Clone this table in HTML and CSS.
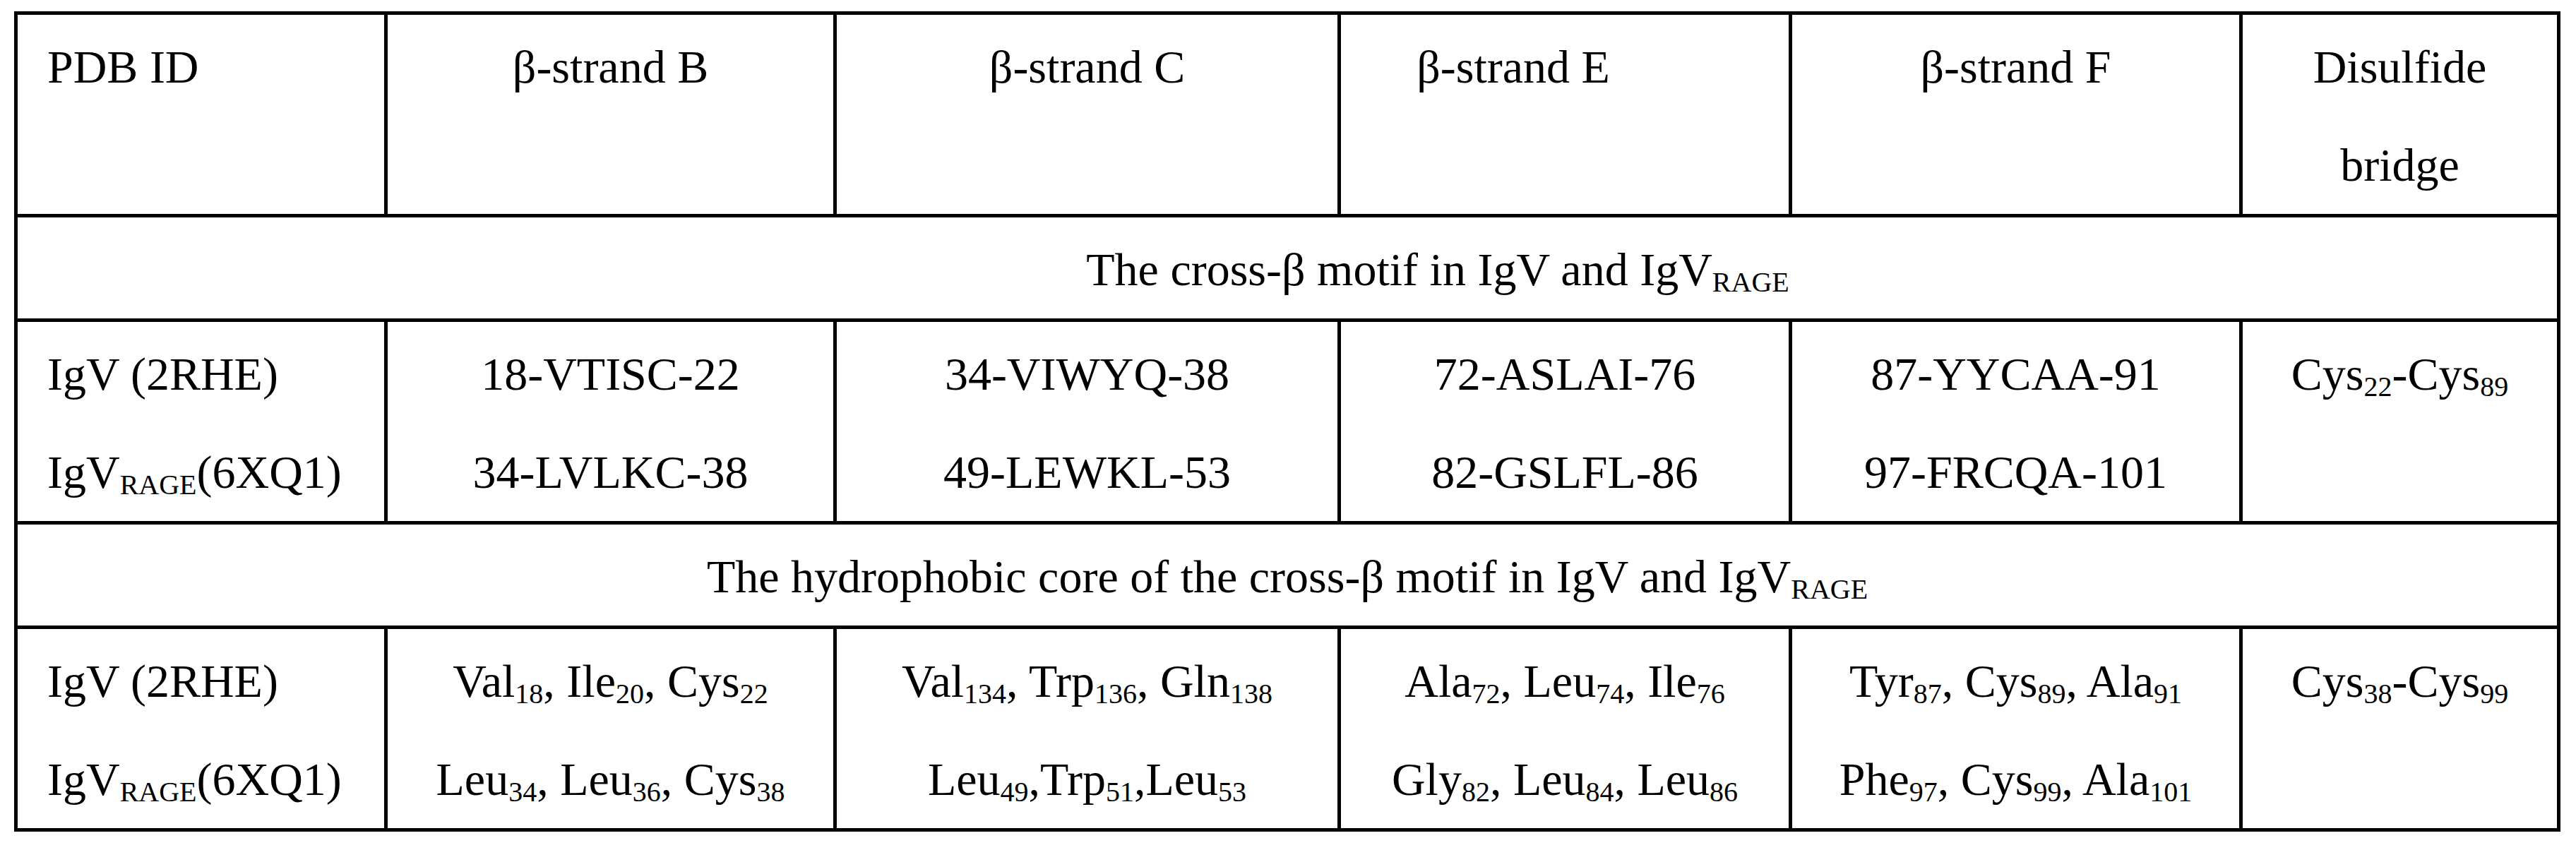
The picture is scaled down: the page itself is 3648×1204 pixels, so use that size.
FILE: index.html
```html
<!DOCTYPE html>
<html lang="en">
<head>
<meta charset="utf-8">
<title>Cross-β motif in IgV and IgV RAGE</title>
<link rel="stylesheet" href="styles.css">
</head>
<body>
<div class="tbl">
  <div class="c left">PDB ID</div>
  <div class="c">β-strand B</div>
  <div class="c">β-strand C</div>
  <div class="c shift-e">β-strand E</div>
  <div class="c">β-strand F</div>
  <div class="c">Disulfide<br>bridge</div>

  <div class="c span offset">The cross-β motif in IgV and IgV<sub>RAGE</sub></div>

  <div class="c left">IgV (2RHE)<br>IgV<sub>RAGE</sub>(6XQ1)</div>
  <div class="c">18-VTISC-22<br>34-LVLKC-38</div>
  <div class="c">34-VIWYQ-38<br>49-LEWKL-53</div>
  <div class="c">72-ASLAI-76<br>82-GSLFL-86</div>
  <div class="c">87-YYCAA-91<br>97-FRCQA-101</div>
  <div class="c">Cys<sub>22</sub>-Cys<sub>89</sub></div>

  <div class="c span">The hydrophobic core of the cross-β motif in IgV and IgV<sub>RAGE</sub></div>

  <div class="c left">IgV (2RHE)<br>IgV<sub>RAGE</sub>(6XQ1)</div>
  <div class="c">Val<sub>18</sub>, Ile<sub>20</sub>, Cys<sub>22</sub><br>Leu<sub>34</sub>, Leu<sub>36</sub>, Cys<sub>38</sub></div>
  <div class="c">Val<sub>134</sub>, Trp<sub>136</sub>, Gln<sub>138</sub><br>Leu<sub>49</sub>,Trp<sub>51</sub>,Leu<sub>53</sub></div>
  <div class="c">Ala<sub>72</sub>, Leu<sub>74</sub>, Ile<sub>76</sub><br>Gly<sub>82</sub>, Leu<sub>84</sub>, Leu<sub>86</sub></div>
  <div class="c">Tyr<sub>87</sub>, Cys<sub>89</sub>, Ala<sub>91</sub><br>Phe<sub>97</sub>, Cys<sub>99</sub>, Ala<sub>101</sub></div>
  <div class="c">Cys<sub>38</sub>-Cys<sub>99</sub></div>
</div>
</body>
</html>
```

FILE: styles.css
```css
html, body {
  margin: 0;
  background: #ffffff;
}

body {
  padding: 16px 0 0 20px;
  font-family: "Liberation Serif", "Times New Roman", serif;
  font-size: 66px;
  color: #000000;
}

.tbl {
  display: grid;
  grid-template-columns: 524px 636px 714px 639px 638px 450px;
  width: max-content;
  border-left: 5px solid #000;
  border-top: 5px solid #000;
}

.c {
  border-right: 5px solid #000;
  border-bottom: 5px solid #000;
  padding-top: 4px;
  line-height: 139px;
  text-align: center;
  white-space: nowrap;
}

.left {
  text-align: left;
  padding-left: 42px;
}

.span {
  grid-column: 1 / -1;
}

.offset {
  padding-left: 426px;
}

.shift-e {
  padding-right: 146px;
}

sub {
  font-size: 40px;
  line-height: 1;
  vertical-align: -9px;
}
```
